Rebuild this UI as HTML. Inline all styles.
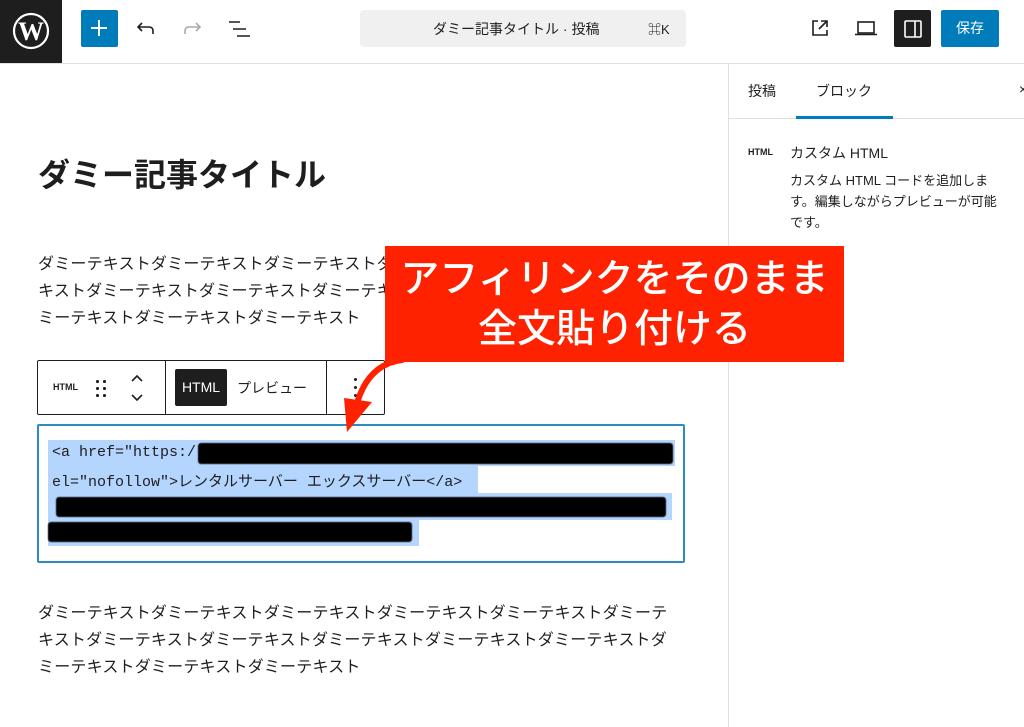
<!DOCTYPE html>
<html><head><meta charset="utf-8"><style>
*{margin:0;padding:0;box-sizing:border-box}
body{width:1024px;height:727px;overflow:hidden;background:#fff;font-family:"Liberation Sans","Noto Sans CJK JP",sans-serif;color:#1e1e1e;position:relative}
.abs{position:absolute}
.p{font-size:16px;line-height:27px;white-space:nowrap;letter-spacing:0.2px}
.code{font-family:"Liberation Mono","Noto Sans CJK JP",monospace;font-size:15px;white-space:nowrap}
.sel{background:#b4d5fe}
.blk{background:#000;border-radius:3px;filter:blur(.4px)}
.dot{position:absolute;width:2.5px;height:2.5px;background:#1e1e1e;border-radius:50%}
</style></head><body>
<div class="abs" style="left:0;top:0;width:62px;height:63px;background:#1e1e1e"></div>
<svg class="abs" style="left:8px;top:8px" width="46" height="46" viewBox="0 0 46 46"><circle cx="23" cy="23" r="17" fill="none" stroke="#fff" stroke-width="2.2"/><text x="23" y="32" text-anchor="middle" font-family="Liberation Serif" font-weight="bold" font-size="26" fill="#fff">W</text></svg>
<div class="abs" style="left:0;top:63px;width:1024px;height:1px;background:#e0e0e0"></div>
<div class="abs" style="left:81px;top:10px;width:37px;height:37px;background:#007cba;border-radius:2px"></div>
<div class="abs" style="left:91px;top:27px;width:16px;height:2px;background:#fff"></div>
<div class="abs" style="left:98px;top:20px;width:2px;height:16px;background:#fff"></div>
<svg class="abs" style="left:134px;top:17px" width="24" height="24" viewBox="0 0 24 24" fill="none" stroke="#1e1e1e" stroke-width="1.6"><path d="M8 6 L4 10 L8 14 M4 10 H15 Q19 10 19 14 V17"/></svg>
<svg class="abs" style="left:180px;top:17px" width="24" height="24" viewBox="0 0 24 24" fill="none" stroke="#aaa" stroke-width="1.6"><path d="M16 6 L20 10 L16 14 M20 10 H9 Q5 10 5 14 V17"/></svg>
<svg class="abs" style="left:226px;top:17px" width="26" height="24" viewBox="0 0 26 24" stroke="#1e1e1e" stroke-width="1.6"><path d="M3 5H14M7 12H20M11 19H24"/></svg>
<div class="abs" style="left:360px;top:10px;width:326px;height:37px;background:#f0f0f0;border-radius:4px"></div>
<div class="abs" style="left:433px;top:19px;font-size:14px">ダミー記事タイトル · 投稿</div>
<div class="abs" style="left:648px;top:19px;font-size:13px">⌘K</div>
<svg class="abs" style="left:808px;top:16px" width="24" height="24" viewBox="0 0 24 24" fill="none" stroke="#1e1e1e" stroke-width="1.6"><path d="M10 5H5V19H19V14M13 5H19V11M19 5L11 13"/></svg>
<svg class="abs" style="left:853px;top:16px" width="26" height="24" viewBox="0 0 26 24" fill="none" stroke="#1e1e1e" stroke-width="1.6"><rect x="5" y="6" width="16" height="11"/><path d="M2 18.5H24"/></svg>
<div class="abs" style="left:894px;top:10px;width:37px;height:37px;background:#1e1e1e;border-radius:2px"></div>
<svg class="abs" style="left:901px;top:17px" width="24" height="24" viewBox="0 0 24 24" fill="none" stroke="#fff" stroke-width="1.6"><rect x="4" y="4" width="16" height="16" rx="1"/><path d="M14 4V20"/></svg>
<div class="abs" style="left:941px;top:10px;width:58px;height:37px;background:#007cba;border-radius:2px;color:#fff;font-size:14px;text-align:center;line-height:37px">保存</div>
<div class="abs" style="left:728px;top:64px;width:1px;height:663px;background:#e0e0e0"></div>
<div class="abs" style="left:728px;top:118px;width:296px;height:1px;background:#e0e0e0"></div>
<div class="abs" style="left:748px;top:81px;font-size:14px">投稿</div>
<div class="abs" style="left:816px;top:81px;font-size:14px">ブロック</div>
<div class="abs" style="left:796px;top:116px;width:97px;height:3px;background:#007cba"></div>
<div class="abs" style="left:1019px;top:81px;font-size:14px">×</div>
<div class="abs" style="left:748px;top:147px;font-size:9px;font-weight:bold">HTML</div>
<div class="abs" style="left:790px;top:143px;font-size:14px">カスタム HTML</div>
<div class="abs" style="left:790px;top:170px;font-size:13px;line-height:21px;white-space:nowrap">カスタム HTML コードを追加しま<br>す。編集しながらプレビューが可能<br>です。</div>
<div class="abs" style="left:38px;top:150px;font-size:32px;font-weight:bold">ダミー記事タイトル</div>
<div class="abs p" style="left:38px;top:251px">ダミーテキストダミーテキストダミーテキストダ<br>キストダミーテキストダミーテキストダミーテキ<br>ミーテキストダミーテキストダミーテキスト</div>
<div class="abs" style="left:37px;top:360px;width:348px;height:55px;border:1px solid #1e1e1e;border-radius:2px"></div>
<div class="abs" style="left:165px;top:360px;width:1px;height:55px;background:#1e1e1e"></div>
<div class="abs" style="left:326px;top:360px;width:1px;height:55px;background:#1e1e1e"></div>
<div class="abs" style="left:53px;top:382px;font-size:9px;font-weight:bold">HTML</div>
<div class="dot" style="left:96px;top:380px"></div><div class="dot" style="left:103px;top:380px"></div>
<div class="dot" style="left:96px;top:387px"></div><div class="dot" style="left:103px;top:387px"></div>
<div class="dot" style="left:96px;top:394px"></div><div class="dot" style="left:103px;top:394px"></div>
<svg class="abs" style="left:128px;top:372px" width="18" height="32" viewBox="0 0 18 32" fill="none" stroke="#1e1e1e" stroke-width="1.6"><path d="M4 9L9 4L14 9M4 23L9 28L14 23"/></svg>
<div class="abs" style="left:175px;top:369px;width:52px;height:37px;background:#1e1e1e;border-radius:2px;color:#fff;font-size:14px;text-align:center;line-height:37px">HTML</div>
<div class="abs" style="left:237px;top:378px;font-size:14px">プレビュー</div>
<div class="abs" style="left:354px;top:378px;width:3px;height:3px;background:#1e1e1e;border-radius:2px;box-shadow:0 8px 0 #1e1e1e,0 16px 0 #1e1e1e"></div>
<div class="abs" style="left:37px;top:424px;width:648px;height:139px;border:2px solid #2d8bc0;border-radius:2px"></div>
<div class="abs sel" style="left:48px;top:440px;width:627px;height:26px"></div>
<div class="abs sel" style="left:48px;top:466px;width:430px;height:27px"></div>
<div class="abs sel" style="left:48px;top:493px;width:624px;height:27px"></div>
<div class="abs sel" style="left:48px;top:520px;width:371px;height:26px"></div>
<div class="abs code" style="left:52px;top:444px">&lt;a href="https:/</div>
<div class="abs blk" style="left:198px;top:443px;width:475px;height:21px"></div>
<div class="abs code" style="left:52px;top:470px">el="nofollow"&gt;レンタルサーバー エックスサーバー&lt;/a&gt;</div>
<div class="abs blk" style="left:56px;top:497px;width:610px;height:20px"></div>
<div class="abs blk" style="left:48px;top:522px;width:364px;height:20px"></div>
<div class="abs p" style="left:38px;top:600px">ダミーテキストダミーテキストダミーテキストダミーテキストダミーテキストダミーテ<br>キストダミーテキストダミーテキストダミーテキストダミーテキストダミーテキストダ<br>ミーテキストダミーテキストダミーテキスト</div>
<div class="abs" style="left:385px;top:246px;width:459px;height:116px;background:#ff2200"></div>
<div class="abs" style="left:385px;top:255px;width:459px;text-align:center;color:#fff;font-size:39px;font-weight:500;line-height:50px;white-space:nowrap">アフィリンクをそのまま<br>全文貼り付ける</div>
<svg class="abs" style="left:330px;top:340px" width="90" height="100" viewBox="0 0 90 100"><path d="M72 20 Q40 24 28 60" fill="none" stroke="#ff2200" stroke-width="6" stroke-linecap="round"/><polygon points="14,58 42,62 17,92" fill="#ff2200"/></svg>
</body></html>
